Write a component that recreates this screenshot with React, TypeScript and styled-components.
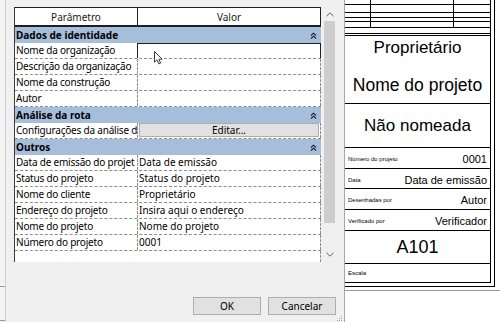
import React from "react";
import styled, { createGlobalStyle, css } from "styled-components";

const GlobalStyle = createGlobalStyle`
  html, body { margin: 0; padding: 0; background: #ffffff; }
  body { width: 500px; height: 322px; overflow: hidden; }
  * { box-sizing: border-box; }
`;

const Screen = styled.div`
  display: flex;
  width: 500px;
  height: 322px;
  overflow: hidden;
`;

const BackStrip = styled.div`
  flex: none;
  width: 5px;
  height: 322px;
  background: #f3f3f3;
  display: flex;
  flex-direction: column;
  padding-top: 286px;
`;

const StripLine = styled.div<{ $gap?: number }>`
  height: 1px;
  background: #9c9c9c;
  margin-top: ${(p) => p.$gap ?? 0}px;
`;

const Dialog = styled.div`
  position: relative;
  flex: none;
  width: 339px;
  height: 322px;
  border-left: 1px solid #cfcfcf;
  background: #f0f0f0;
  padding: 7px 8px 0 8px;
  display: flex;
  flex-direction: column;
  align-items: flex-start;
  font-family: "Noto Sans", "Segoe UI", sans-serif;
  font-size: 10px;
  color: #000;
`;

const GridFrame = styled.div`
  display: flex;
  width: 324px;
  height: 255px;
`;

const Table = styled.div`
  width: 307px;
  height: 255px;
  border-left: 1px solid #3c3c3c;
  display: flex;
  flex-direction: column;
`;

const HeaderRow = styled.div`
  display: grid;
  grid-template-columns: 123px 183px;
  height: 20px;
  border-top: 1px solid #1e1e1e;
  border-bottom: 2px solid #1e1e1e;
  background: #ffffff;
`;

const HeaderCell = styled.div`
  display: flex;
  align-items: center;
  justify-content: center;
  border-right: 1px solid #1e1e1e;
  color: #1a1a1a;
`;

const CategoryRow = styled.div`
  height: 16px;
  display: flex;
  align-items: center;
  justify-content: space-between;
  padding: 0 4px 0 1px;
  background: #a6bedc;
  font-weight: 700;
  white-space: nowrap;
`;

const PropRow = styled.div`
  display: grid;
  grid-template-columns: 123px 183px;
  height: 16px;
  border-bottom: 1px dashed #8c8c8c;
  background: #ffffff;
`;

const NameCell = styled.div<{ $focused?: boolean }>`
  padding-left: 1px;
  border-right: 1px dashed #8c8c8c;
  white-space: nowrap;
  overflow: hidden;
  line-height: 15px;
  letter-spacing: -0.2px;
  ${(p) =>
    p.$focused &&
    css`
      border-right: 1px solid #1e1e1e;
    `}
`;

const ValueCell = styled.div<{ $focused?: boolean }>`
  position: relative;
  padding-left: 1px;
  border-right: 1px dashed #8c8c8c;
  white-space: nowrap;
  line-height: 15px;
  ${(p) =>
    p.$focused &&
    css`
      border-right: 1px solid #1e1e1e;
      box-shadow: inset 0 1px 0 #1e1e1e;
    `}
`;

const EditButton = styled.div`
  height: 14px;
  margin: 0 1px 0 0;
  background: #e1e1e1;
  border: 1px solid #adadad;
  display: flex;
  align-items: center;
  justify-content: center;
  line-height: 12px;
`;

const Filler = styled.div`
  flex: 1;
  background: #ffffff;
  border-right: 1px dashed #8c8c8c;
`;

const Pointer = styled.svg`
  position: absolute;
  left: 16px;
  top: 8px;
  overflow: visible;
`;

const ScrollBar = styled.div`
  flex: none;
  width: 17px;
  height: 255px;
  display: flex;
  flex-direction: column;
  background: #f0f0f0;
`;

const ScrollArrow = styled.div<{ $h: number }>`
  height: ${(p) => p.$h}px;
  display: flex;
  align-items: center;
  justify-content: center;
`;

const ScrollTrack = styled.div`
  flex: 1;
  display: flex;
  justify-content: center;
`;

const ScrollThumb = styled.div`
  width: 11px;
  height: 202px;
  background: #cdcdcd;
`;

const Footer = styled.div`
  align-self: stretch;
  display: flex;
  justify-content: flex-end;
  gap: 7px;
  margin-top: 35px;
`;

const DialogButton = styled.button`
  width: 68px;
  height: 18px;
  padding: 0;
  background: #e1e1e1;
  border: 1px solid #adadad;
  font: inherit;
  color: #000;
  line-height: 14px;
`;

const Grip = styled.svg`
  position: absolute;
  right: 1px;
  bottom: 0;
`;

const Canvas = styled.div`
  flex: none;
  width: 156px;
  height: 322px;
  background: #ffffff;
  border-left: 1px solid #a8a8a8;
  display: flex;
  flex-direction: column;
  font-family: "Liberation Sans", Arial, sans-serif;
  color: #000;
`;

const SheetFrame = styled.div`
  width: 150px;
  height: 287px;
  border-right: 1px solid #000;
  border-bottom: 1px solid #000;
`;

const TitleBlock = styled.div`
  width: 146px;
  height: 283px;
  border-right: 1px solid #000;
  border-bottom: 1px solid #000;
  display: flex;
  flex-direction: column;
`;

const TopGrid = styled.div`
  display: grid;
  grid-template-columns: 26px 83px 1fr;
  grid-template-rows: 5px 8px 5px 4px 6px;
`;

const TopCell = styled.div<{ $last?: boolean }>`
  border-bottom: 1px solid #000;
  border-right: ${(p) => (p.$last ? "none" : "1px solid #000")};
`;

const Spacer = styled.div<{ $h: number }>`
  height: ${(p) => p.$h}px;
  flex: none;
`;

const DoubleRule = styled.div`
  height: 3px;
  flex: none;
  border-top: 1px solid #000;
  border-bottom: 1px solid #000;
`;

const OwnerSection = styled.div`
  height: 68px;
  flex: none;
  border-bottom: 1px solid #000;
  display: flex;
  flex-direction: column;
  align-items: center;
  padding-top: 2px;
  gap: 17px;
`;

const BigText = styled.div<{ $size: number }>`
  font-size: ${(p) => p.$size}px;
  line-height: 20px;
  white-space: nowrap;
`;

const CenterSection = styled.div<{ $h?: number }>`
  height: ${(p) => (p.$h ? `${p.$h}px` : "auto")};
  flex: ${(p) => (p.$h ? "none" : "1")};
  border-bottom: ${(p) => (p.$h ? "1px solid #000" : "none")};
  display: flex;
  align-items: center;
  justify-content: center;
`;

const InfoRow = styled.div<{ $h: number }>`
  height: ${(p) => p.$h}px;
  flex: none;
  border-bottom: 1px solid #000;
  display: flex;
  align-items: center;
  justify-content: space-between;
  padding: 2px 3px 0 3px;
`;

const ScaleRow = styled.div`
  flex: 1;
  display: flex;
  align-items: center;
  padding: 0 3px;
`;

const SmallLabel = styled.span`
  font-size: 6px;
  white-space: nowrap;
`;

const InfoValue = styled.span`
  font-size: 11px;
  white-space: nowrap;
`;

const SheetBaseLine = styled.div`
  margin-top: 3px;
  height: 1px;
  background: #9a9a9a;
`;

const CollapseIcon = () => (
  <svg width="7" height="7" viewBox="0 0 7 7">
    <path
      d="M1 3.5 L3.5 1.2 L6 3.5 M1 6.5 L3.5 4.2 L6 6.5"
      stroke="#1e1e1e"
      strokeWidth="1.1"
      fill="none"
    />
  </svg>
);

const Chevron = ({ down }: { down?: boolean }) => (
  <svg width="8" height="5" viewBox="0 0 8 5">
    <path
      d={down ? "M0.5 0.8 L4 4.2 L7.5 0.8" : "M0.5 4.2 L4 0.8 L7.5 4.2"}
      stroke="#606060"
      strokeWidth="1"
      fill="none"
    />
  </svg>
);

const identRows = [
  "Nome da organização",
  "Descrição da organização",
  "Nome da construção",
  "Autor",
];

const otherRows: [string, string][] = [
  ["Data de emissão do projet", "Data de emissão"],
  ["Status do projeto", "Status do projeto"],
  ["Nome do cliente", "Proprietário"],
  ["Endereço do projeto", "Insira aqui o endereço"],
  ["Nome do projeto", "Nome do projeto"],
  ["Número do projeto", "0001"],
];

const infoRows: [string, string, number][] = [
  ["Número do projeto", "0001", 21],
  ["Data", "Data de emissão", 20],
  ["Desenhadas por", "Autor", 21],
  ["Verificado por", "Verificador", 21],
];

export default function App() {
  return (
    <>
      <GlobalStyle />
      <Screen>
        <BackStrip>
          <StripLine />
          <StripLine $gap={33} />
        </BackStrip>

        <Dialog>
          <GridFrame>
            <Table>
              <HeaderRow>
                <HeaderCell>Parâmetro</HeaderCell>
                <HeaderCell>Valor</HeaderCell>
              </HeaderRow>

              <CategoryRow>
                <span>Dados de identidade</span>
                <CollapseIcon />
              </CategoryRow>
              {identRows.map((name, i) => (
                <PropRow key={name}>
                  <NameCell $focused={i === 0}>{name}</NameCell>
                  <ValueCell $focused={i === 0}>
                    {i === 0 && (
                      <Pointer width="10" height="14" viewBox="0 0 10 14">
                        <path
                          d="M0.5 0.5 V11.2 L3 8.9 L4.9 12.9 L6.6 12.1 L4.8 8.2 H8.2 Z"
                          fill="#ffffff"
                          stroke="#3a3a3a"
                          strokeWidth="1"
                          strokeLinejoin="round"
                        />
                      </Pointer>
                    )}
                  </ValueCell>
                </PropRow>
              ))}

              <CategoryRow>
                <span>Análise da rota</span>
                <CollapseIcon />
              </CategoryRow>
              <PropRow>
                <NameCell>Configurações da análise d</NameCell>
                <ValueCell>
                  <EditButton>Editar...</EditButton>
                </ValueCell>
              </PropRow>

              <CategoryRow>
                <span>Outros</span>
                <CollapseIcon />
              </CategoryRow>
              {otherRows.map(([name, value]) => (
                <PropRow key={name}>
                  <NameCell>{name}</NameCell>
                  <ValueCell>{value}</ValueCell>
                </PropRow>
              ))}
              <Filler />
            </Table>

            <ScrollBar>
              <ScrollArrow $h={14}>
                <Chevron />
              </ScrollArrow>
              <ScrollTrack>
                <ScrollThumb />
              </ScrollTrack>
              <ScrollArrow $h={16}>
                <Chevron down />
              </ScrollArrow>
            </ScrollBar>
          </GridFrame>

          <Footer>
            <DialogButton>OK</DialogButton>
            <DialogButton>Cancelar</DialogButton>
          </Footer>

          <Grip width="6" height="6" viewBox="0 0 6 6">
            {[
              [4, 0],
              [2, 2],
              [4, 2],
              [0, 4],
              [2, 4],
              [4, 4],
            ].map(([x, y]) => (
              <rect key={`${x}-${y}`} x={x} y={y} width="1" height="1" fill="#a0a0a0" />
            ))}
          </Grip>
        </Dialog>

        <Canvas>
          <SheetFrame>
            <TitleBlock>
              <TopGrid>
                {Array.from({ length: 15 }).map((_, i) => (
                  <TopCell key={i} $last={i % 3 === 2} />
                ))}
              </TopGrid>
              <Spacer $h={5} />
              <DoubleRule />
              <OwnerSection>
                <BigText $size={17}>Proprietário</BigText>
                <BigText $size={17.5}>Nome do projeto</BigText>
              </OwnerSection>
              <CenterSection $h={44}>
                <BigText $size={17}>Não nomeada</BigText>
              </CenterSection>
              {infoRows.map(([label, value, h]) => (
                <InfoRow key={label} $h={h}>
                  <SmallLabel>{label}</SmallLabel>
                  <InfoValue>{value}</InfoValue>
                </InfoRow>
              ))}
              <CenterSection $h={33}>
                <BigText $size={18}>A101</BigText>
              </CenterSection>
              <ScaleRow>
                <SmallLabel>Escala</SmallLabel>
              </ScaleRow>
            </TitleBlock>
          </SheetFrame>
          <SheetBaseLine />
        </Canvas>
      </Screen>
    </>
  );
}
